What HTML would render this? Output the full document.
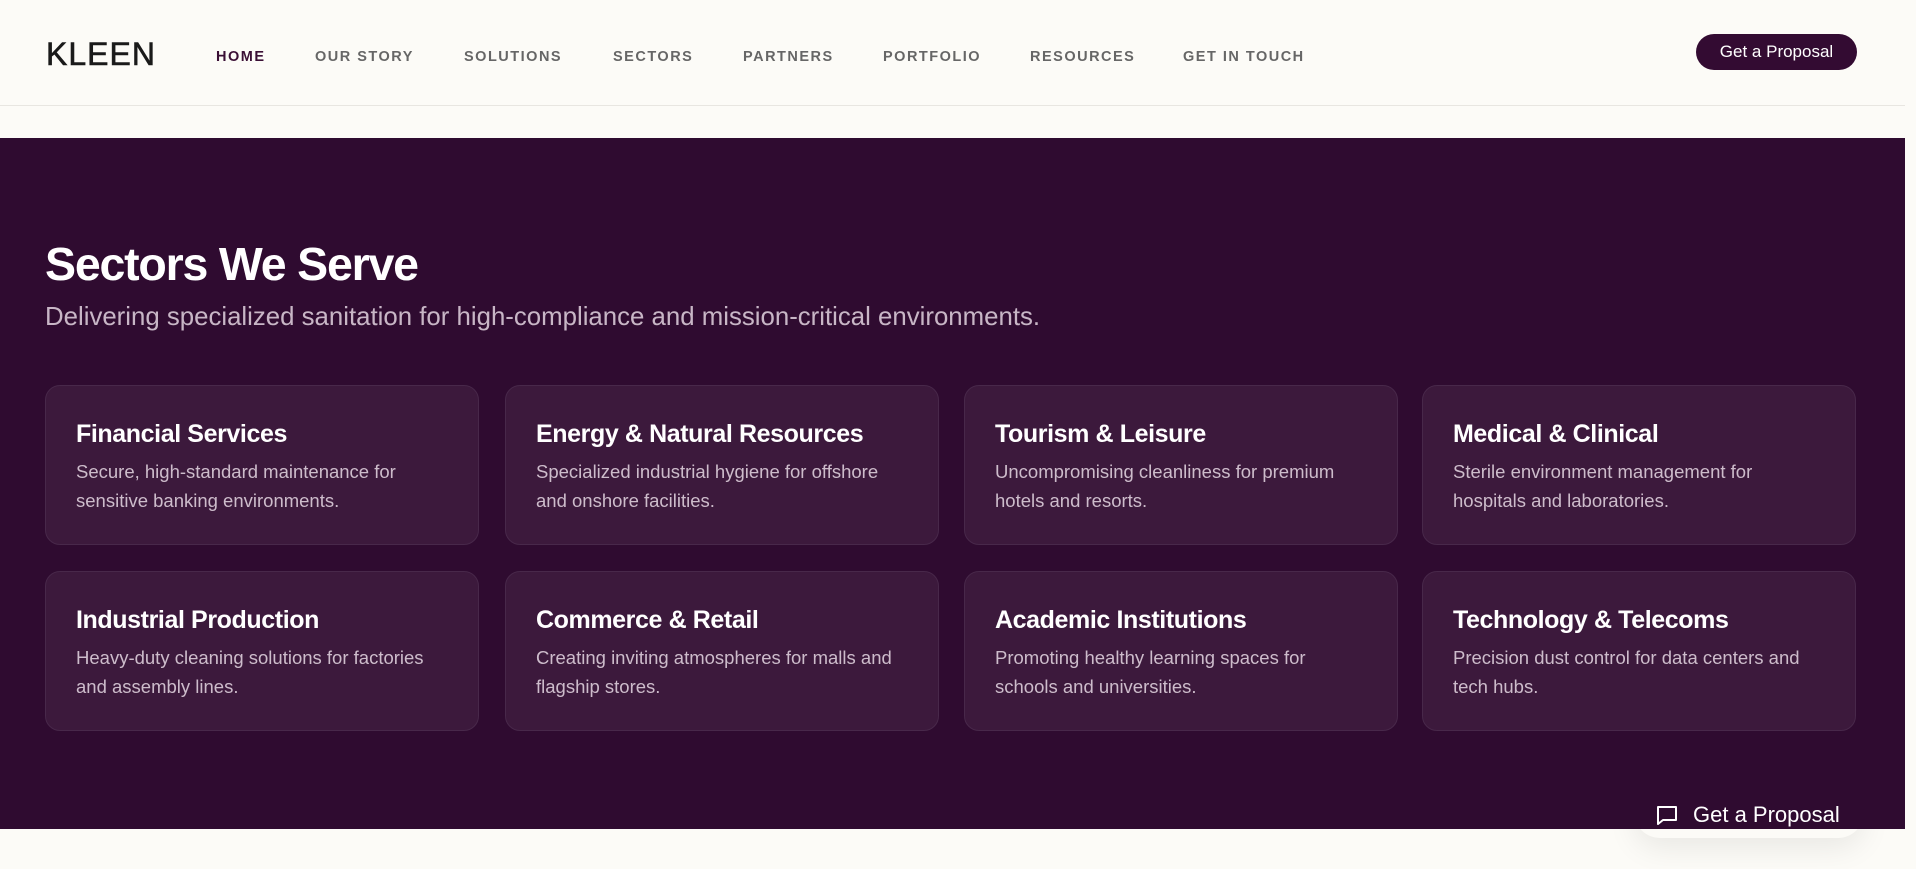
<!DOCTYPE html>
<html><head><meta charset="utf-8"><style>
*{margin:0;padding:0;box-sizing:border-box}
body{width:1916px;height:869px;overflow:hidden;background:#fcfbf7;font-family:"Liberation Sans",sans-serif;position:relative}
.hdr{position:absolute;left:0;top:0;width:1905px;height:106px;border-bottom:1px solid #e8e6e1;background:#fcfbf7}
.logo{position:absolute;left:46px;top:36px;font-size:32px;color:#1a1a1a;letter-spacing:1px;font-weight:400;-webkit-text-stroke:.6px #1a1a1a}
.nav a{position:absolute;top:49px;font-size:14.5px;font-weight:700;letter-spacing:1.5px;color:#666;text-decoration:none}
.btn{position:absolute;left:1696px;top:34px;width:161px;height:36px;border-radius:18px;background:#330b32;color:#fff;font-size:17px;text-align:center;line-height:36px}
.sec{position:absolute;left:0;top:138px;width:1905px;height:691px;background:#2f0b30}
h1{position:absolute;left:45px;top:99px;font-size:46.5px;color:#fff;letter-spacing:-1.2px;font-weight:700}
.sub{position:absolute;left:45px;top:165px;font-size:25.8px;color:#c8b6c6}
.card{position:absolute;width:434px;height:160px;border-radius:15px;background:#3c193c;border:1px solid #48284a}
.card h3{position:absolute;left:30px;top:34px;font-size:25px;color:#fff;letter-spacing:-.4px}
.card p{position:absolute;left:30px;top:71px;width:370px;font-size:18.5px;line-height:29px;color:#cdbccb}
.fab{position:absolute;left:1634px;top:785px;width:230px;height:53px;border-radius:26px;background:#fcfbf7;box-shadow:0 10px 30px rgba(0,0,0,.08)}
.fabt{position:absolute;left:1655px;top:802px;color:#fff;font-size:22px;display:flex;align-items:center;gap:14px}
</style></head><body>
<div class="hdr">
<div class="logo">KLEEN</div>
<div class="nav">
<a style="left:216px;color:#3a0f35">HOME</a>
<a style="left:315px">OUR STORY</a>
<a style="left:464px">SOLUTIONS</a>
<a style="left:613px">SECTORS</a>
<a style="left:743px">PARTNERS</a>
<a style="left:883px">PORTFOLIO</a>
<a style="left:1030px">RESOURCES</a>
<a style="left:1183px">GET IN TOUCH</a>
</div>
<div class="btn">Get a Proposal</div>
</div>
<div class="fab"></div>
<div class="sec">
<h1>Sectors We Serve</h1>
<div class="sub">Delivering specialized sanitation for high-compliance and mission-critical environments.</div>
<div class="card" style="left:45px;top:247px"><h3>Financial Services</h3><p>Secure, high-standard maintenance for sensitive banking environments.</p></div>
<div class="card" style="left:505px;top:247px"><h3>Energy &amp; Natural Resources</h3><p>Specialized industrial hygiene for offshore and onshore facilities.</p></div>
<div class="card" style="left:964px;top:247px"><h3>Tourism &amp; Leisure</h3><p>Uncompromising cleanliness for premium hotels and resorts.</p></div>
<div class="card" style="left:1422px;top:247px"><h3>Medical &amp; Clinical</h3><p>Sterile environment management for hospitals and laboratories.</p></div>
<div class="card" style="left:45px;top:433px"><h3>Industrial Production</h3><p>Heavy-duty cleaning solutions for factories and assembly lines.</p></div>
<div class="card" style="left:505px;top:433px"><h3>Commerce &amp; Retail</h3><p>Creating inviting atmospheres for malls and flagship stores.</p></div>
<div class="card" style="left:964px;top:433px"><h3>Academic Institutions</h3><p>Promoting healthy learning spaces for schools and universities.</p></div>
<div class="card" style="left:1422px;top:433px"><h3>Technology &amp; Telecoms</h3><p>Precision dust control for data centers and tech hubs.</p></div>
</div>
<div class="fabt"><svg width="24" height="24" viewBox="0 0 24 24" fill="none" stroke="#fff" stroke-width="2" stroke-linejoin="round"><path d="M3 4h18v13H8l-5 4z"/></svg>Get a Proposal</div>
</body></html>
